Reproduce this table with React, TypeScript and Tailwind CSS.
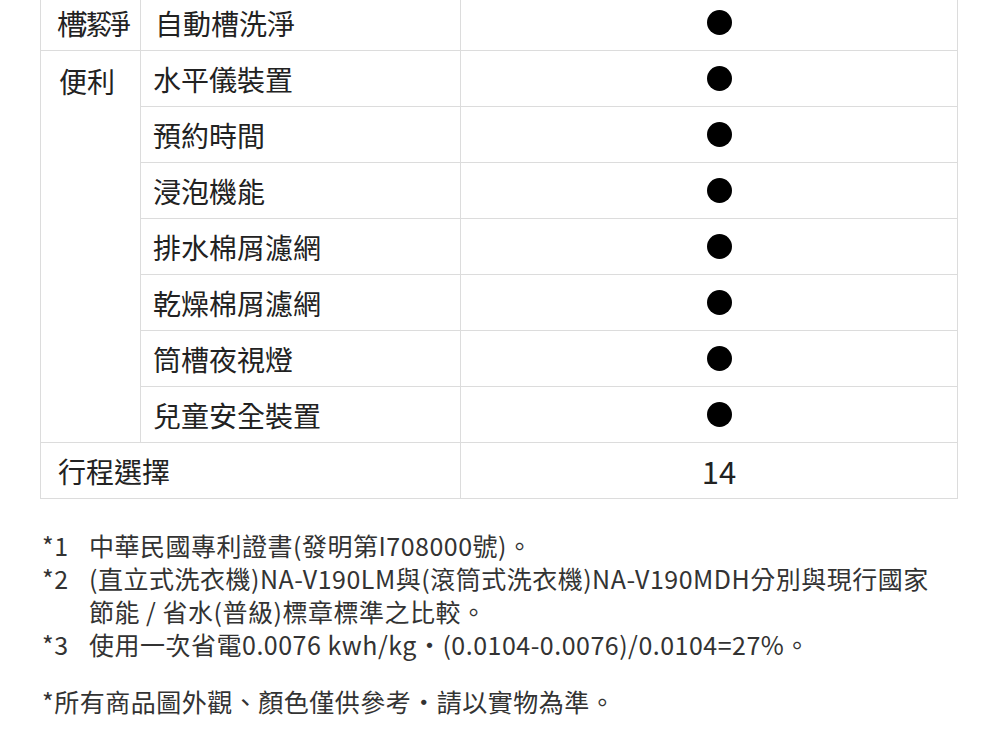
const font = { fontFamily: '"Noto Sans CJK TC", "Noto Sans", sans-serif' };

const features = ["預約時間", "浸泡機能", "排水棉屑濾網", "乾燥棉屑濾網", "筒槽夜視燈", "兒童安全裝置"];

function Dot() {
  return (
    <div className="flex justify-center pl-5">
      <span className="block h-[25px] w-[25px] rounded-full bg-black" />
    </div>
  );
}

const cell = "border border-[#dcdcdc] h-[56px] align-middle";

export default function App() {
  return (
    <div className="min-h-[731px] bg-white text-[#222]" style={font}>
      <div className="overflow-hidden pl-10">
        <table className="-mt-[6px] w-[917px] table-fixed border-collapse text-[28px] leading-none">
          <colgroup>
            <col className="w-[100px]" />
            <col className="w-[320px]" />
            <col className="w-[497px]" />
          </colgroup>
          <tbody>
            <tr>
              <td className={`${cell} pl-[16px] tracking-[-5px]`}>槽潔淨</td>
              <td className={`${cell} pl-[14px]`}>自動槽洗淨</td>
              <td className={cell}><Dot /></td>
            </tr>
            <tr>
              <td rowSpan={7} className={`${cell} !align-top pl-[18px] pt-[16px]`}>便利</td>
              <td className={`${cell} pl-[12px]`}>水平儀裝置</td>
              <td className={cell}><Dot /></td>
            </tr>
            {features.map((f) => (
              <tr key={f}>
                <td className={`${cell} pl-[12px]`}>{f}</td>
                <td className={cell}><Dot /></td>
              </tr>
            ))}
            <tr>
              <td colSpan={2} className={`${cell} pl-[17px]`}>行程選擇</td>
              <td className={`${cell} pl-5 text-center text-[31px]`}>14</td>
            </tr>
          </tbody>
        </table>
      </div>

      <div className="pl-[42px] pt-[30px] text-[25px] leading-[33px] tracking-[0.5px] text-[#333]">
        <div className="flex">
          <span className="w-[47px] shrink-0">*1</span>
          <span>中華民國專利證書(發明第I708000號)。</span>
        </div>
        <div className="flex">
          <span className="w-[47px] shrink-0">*2</span>
          <span>
            (直立式洗衣機)NA-V190LM與(滾筒式洗衣機)NA-V190MDH分別與現行國家
            <br />
            節能 / 省水(普級)標章標準之比較。
          </span>
        </div>
        <div className="flex">
          <span className="w-[47px] shrink-0">*3</span>
          <span>使用一次省電0.0076 kwh/kg·(0.0104-0.0076)/0.0104=27%。</span>
        </div>
        <div className="mt-[24px]">*所有商品圖外觀、顏色僅供參考·請以實物為準。</div>
      </div>
    </div>
  );
}
